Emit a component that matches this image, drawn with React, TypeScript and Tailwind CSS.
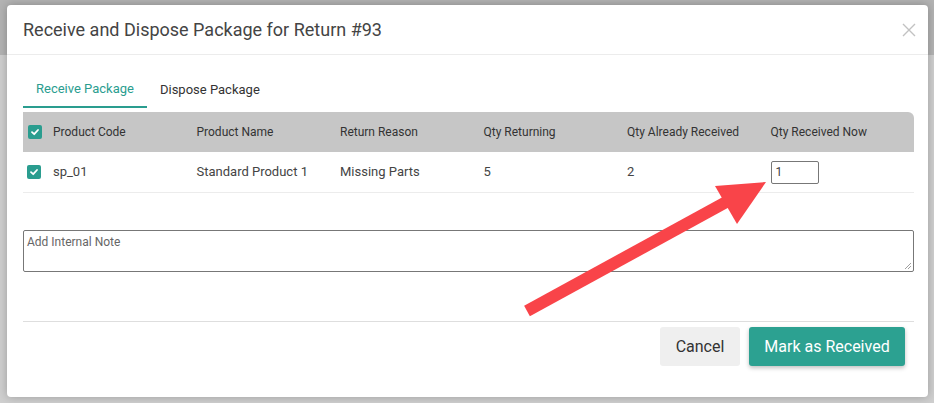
import React from "react";

function Check() {
  return (
    <span className="flex h-[14px] w-[14px] items-center justify-center rounded-[2px] bg-[#2a9d8f]">
      <svg width="10" height="10" viewBox="0 0 10 10">
        <path d="M2 5.2 L4.2 7.2 L8 3" fill="none" stroke="white" strokeWidth="1.8" strokeLinecap="round" strokeLinejoin="round" />
      </svg>
    </span>
  );
}

export default function App() {
  const cols = ["Product Code", "Product Name", "Return Reason", "Qty Returning", "Qty Already Received", "Qty Received Now"];
  return (
    <div className="relative h-[403px] w-[934px] overflow-hidden bg-[#cfcfcf]" style={{ fontFamily: "Roboto, 'Liberation Sans', sans-serif" }}>
      <div className="absolute left-0 top-0 h-[55px] w-full bg-[#b3b3b3]" />
      <div className="absolute left-[7px] top-[5px] flex h-[392px] w-[921px] flex-col rounded-[4px] bg-white shadow-[0_0_10px_rgba(0,0,0,0.25)]">
        <div className="flex h-[50px] items-center justify-between border-b border-[#ececec] pl-4 pr-[12px]">
          <span className="text-[18px] text-[#444]">Receive and Dispose Package for Return #93</span>
          <svg width="14" height="14" viewBox="0 0 14 14" className="mt-[1px]">
            <path d="M1 1 L13 13 M13 1 L1 13" stroke="#c2c2c2" strokeWidth="1.4" />
          </svg>
        </div>
        <div className="flex flex-col pl-4 pr-[14px] pt-[17px]">
          <div className="flex h-[36px]">
            <div className="flex items-center border-b-2 border-[#2a9d8f] px-[13px] text-[13px] text-[#2a9d8f]">Receive Package</div>
            <div className="flex items-center px-[13px] text-[13px] text-[#333]">Dispose Package</div>
          </div>
          <div className="mt-[4px] grid h-[40px] grid-cols-[30px_repeat(6,1fr)] items-center rounded-tr-[6px] bg-[#c6c6c6] text-[12px] text-[#333]">
            <div className="pl-[5px]"><Check /></div>
            {cols.map((c) => (
              <div key={c}>{c}</div>
            ))}
          </div>
          <div className="grid h-[41px] grid-cols-[30px_repeat(6,1fr)] items-center border-b border-[#ececec] text-[13px] text-[#444]">
            <div className="pl-[4px]"><Check /></div>
            <div>sp_01</div>
            <div>Standard Product 1</div>
            <div>Missing Parts</div>
            <div>5</div>
            <div>2</div>
            <div>
              <div className="flex h-[23px] w-[48px] items-center rounded-[2px] border border-[#777] pl-[4px] text-[12px] text-[#444]">1</div>
            </div>
          </div>
          <div className="relative mt-[37px] h-[42px] rounded-[2px] border border-[#777] px-[3px] pt-[2px] text-[12px] text-[#666]">
            Add Internal Note
            <svg width="8" height="8" viewBox="0 0 8 8" className="absolute bottom-[1px] right-[1px]">
              <path d="M7 1 L1 7 M7 4 L4 7" stroke="#888" strokeWidth="0.8" />
            </svg>
          </div>
          <div className="mt-[49px] border-t border-[#dedede]" />
          <div className="flex justify-end gap-[9px] pr-[9px] pt-[5px]">
            <button className="h-[39px] w-[80px] rounded-[3px] bg-[#efefef] text-[16px] text-[#333]">Cancel</button>
            <button className="h-[39px] w-[156px] rounded-[3px] bg-[#2ca191] text-[16px] text-white shadow-[0_2px_4px_rgba(0,0,0,0.25)]">Mark as Received</button>
          </div>
        </div>
      </div>
      <svg className="absolute left-0 top-0" width="934" height="403" viewBox="0 0 934 403">
        <line x1="527" y1="311" x2="728" y2="201" stroke="#f94449" strokeWidth="12" />
        <polygon points="766,182 715,186 737,224" fill="#f94449" />
      </svg>
    </div>
  );
}
